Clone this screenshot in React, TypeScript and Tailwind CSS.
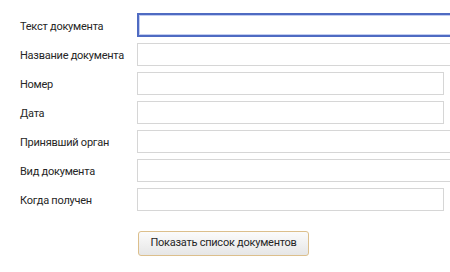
import React from "react";

const rows: { label: string; wide: boolean; focus?: boolean }[] = [
  { label: "Текст документа", wide: true, focus: true },
  { label: "Название документа", wide: true },
  { label: "Номер", wide: false },
  { label: "Дата", wide: false },
  { label: "Принявший орган", wide: true },
  { label: "Вид документа", wide: true },
  { label: "Когда получен", wide: false },
];

export default function App() {
  return (
    <div
      className="w-[450px] h-[272px] bg-white overflow-hidden text-[#262626] text-[11px] tracking-[-0.25px]"
      style={{ fontFamily: 'Roboto, "Noto Sans", sans-serif' }}
    >
      <div className="pt-[13px] pl-[20px] flex flex-col gap-[5px]">
        {rows.map((r) => (
          <div key={r.label} className="flex items-center h-[24px]">
            <div className="w-[117px] shrink-0 pt-[4px]">{r.label}</div>
            {r.focus ? (
              <div className="h-[24px] w-[330px] shrink-0 border-2 border-[#4f6bc2] bg-white shadow-[inset_0_0_0_1px_#c2cdf0]" />
            ) : (
              <div
                className={
                  "h-[23px] shrink-0 border border-[#d6d6d6] bg-white " +
                  (r.wide ? "w-[330px]" : "w-[307px]")
                }
              />
            )}
          </div>
        ))}
      </div>
      <div className="pl-[138px] pt-[20px]">
        <button className="h-[25px] w-[171px] rounded-[3px] border border-[#dcbf8c] bg-gradient-to-b from-[#fbfbfb] to-[#e6e6e6] text-[11px] tracking-[-0.25px] text-[#262626]">
          Показать список документов
        </button>
      </div>
    </div>
  );
}
